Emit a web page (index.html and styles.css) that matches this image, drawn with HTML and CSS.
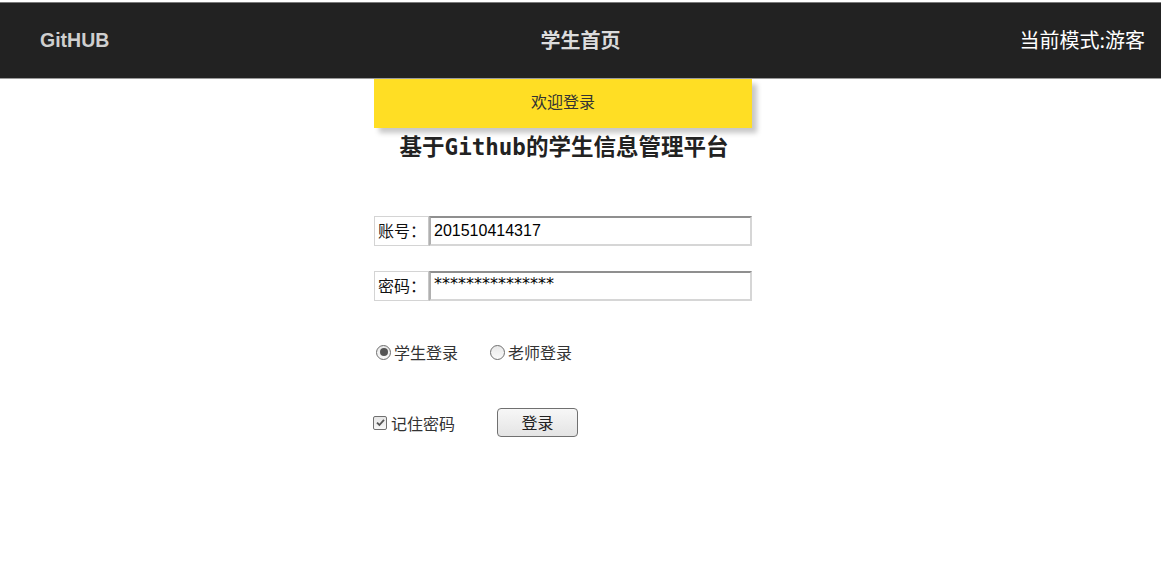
FILE: index.html
```html
<!DOCTYPE html>
<html lang="zh">
<head>
<meta charset="utf-8">
<title>学生首页</title>
<link rel="stylesheet" href="styles.css">
</head>
<body>
<nav class="navbar">
  <div class="brand">GitHUB</div>
  <div class="page-title">学生首页</div>
  <div class="mode">当前模式:游客</div>
</nav>
<main class="panel">
  <div class="welcome">欢迎登录</div>
  <h2 class="title">基于Github的学生信息管理平台</h2>
  <form class="login">
    <div class="field">
      <span class="field-label">账号：</span>
      <input class="field-input" type="text" value="201510414317">
    </div>
    <div class="field field-pass">
      <span class="field-label">密码：</span>
      <input class="field-input pass" type="text" value="***************">
    </div>
    <div class="roles">
      <label class="role"><span class="radio checked"><span class="dot"></span></span>学生登录</label>
      <label class="role"><span class="radio"></span>老师登录</label>
    </div>
    <div class="actions">
      <label class="remember"><span class="check"><svg width="11" height="11" viewBox="0 0 11 11"><path d="M2 5.6 L4.4 8 L9 2.8" fill="none" stroke="#555" stroke-width="1.8"/></svg></span>记住密码</label>
      <button class="btn" type="button">登录</button>
    </div>
  </form>
</main>
</body>
</html>
```

FILE: styles.css
```css
html, body {
  margin: 0;
  padding: 0;
  background: #fff;
  font-family: "Noto Sans CJK SC", "Liberation Sans", sans-serif;
}

.navbar {
  margin-top: 2px;
  height: 75px;
  background: #222;
  border-top: 1px solid #7a7a7a;
  border-bottom: 1px solid #9a9a9a;
  display: grid;
  grid-template-columns: 1fr auto 1fr;
  align-items: center;
  padding: 0 16px;
}

.brand {
  font-family: "Liberation Sans", sans-serif;
  font-weight: bold;
  font-size: 19.5px;
  color: #cfcfcf;
  justify-self: start;
  margin-left: 24px;
}

.page-title {
  font-weight: bold;
  font-size: 20px;
  color: #dcdcdc;
  margin-top: -3px;
}

.mode {
  font-size: 20px;
  color: #fff;
  margin-top: -2px;
  justify-self: end;
}

.panel {
  width: 378px;
  margin-left: 374px;
}

.welcome {
  height: 49px;
  background: #ffde24;
  box-shadow: 5px 5px 5px #c8c8c8;
  display: flex;
  align-items: center;
  justify-content: center;
  font-size: 16px;
  color: #333;
  padding-bottom: 6px;
  box-sizing: border-box;
}

.title {
  margin: 4px 0 0 2px;
  text-align: center;
  font-family: "DejaVu Sans Mono", "Noto Sans CJK SC", monospace;
  font-weight: bold;
  font-size: 22.5px;
  line-height: 30px;
  color: #222;
}

.login {
  margin-top: 54px;
}

.field {
  display: flex;
  height: 30px;
  width: 378px;
}

.field-pass {
  margin-top: 25px;
}

.field-label {
  box-sizing: border-box;
  width: 55px;
  height: 30px;
  border: 1px solid #d4d4d4;
  border-right: 1px solid #c8c8c8;
  display: flex;
  align-items: center;
  padding-left: 3px;
  padding-bottom: 2px;
  font-size: 16px;
  color: #111;
}

.field-input {
  box-sizing: border-box;
  flex: 1;
  height: 30px;
  margin: 0;
  border-style: solid;
  border-width: 2px;
  border-color: #8f8f8f #d6d6d6 #d6d6d6 #b0b0b0;
  padding: 0 0 0 3px;
  font-family: "Liberation Sans", sans-serif;
  font-size: 16px;
  color: #000;
  background: #fff;
  outline: none;
}

.field-input.pass {
  font-family: "DejaVu Sans", sans-serif;
  padding-bottom: 5px;
}

.roles {
  margin-top: 41px;
  display: flex;
  align-items: center;
  height: 20px;
  padding-left: 2px;
}

.role {
  display: flex;
  align-items: center;
  font-size: 16px;
  color: #333;
  margin-right: 32px;
}

.radio {
  box-sizing: border-box;
  width: 15px;
  height: 15px;
  border-radius: 50%;
  border: 1px solid #6e6e6e;
  background: linear-gradient(#e8e8e8, #fafafa);
  display: flex;
  align-items: center;
  justify-content: center;
  margin-right: 3px;
}

.dot {
  width: 8px;
  height: 8px;
  border-radius: 50%;
  background: #555;
}

.actions {
  margin-top: 46px;
  display: flex;
  align-items: center;
  height: 29px;
}

.remember {
  display: flex;
  align-items: center;
  font-size: 16px;
  color: #333;
  margin-left: -1px;
  width: 124px;
}

.check {
  box-sizing: border-box;
  width: 14px;
  height: 14px;
  border: 1px solid #707070;
  border-radius: 2px;
  background: linear-gradient(#e6e6e6, #f7f7f7);
  display: flex;
  align-items: center;
  justify-content: center;
  margin-right: 4px;
}

.btn {
  box-sizing: border-box;
  width: 81px;
  height: 29px;
  border: 1px solid #707070;
  border-radius: 4px;
  background: linear-gradient(#f7f7f7, #e4e4e4);
  font-family: "Noto Sans CJK SC", sans-serif;
  font-size: 16px;
  color: #222;
  padding: 0 0 2px;
}
```
